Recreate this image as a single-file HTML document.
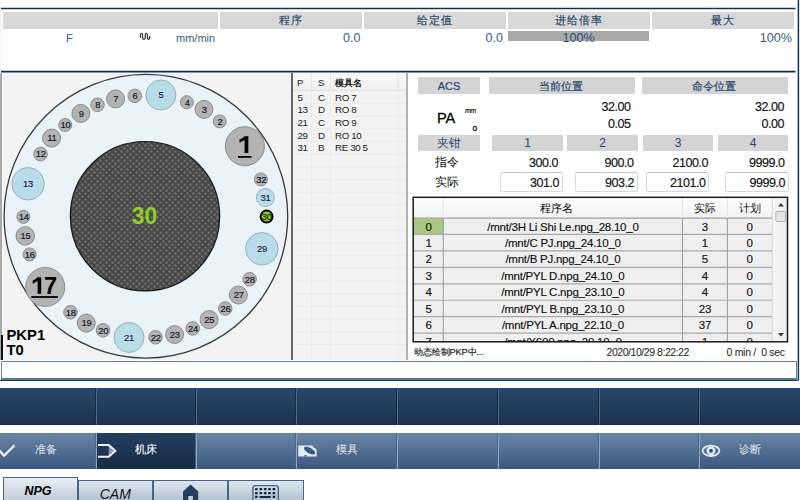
<!DOCTYPE html>
<html><head><meta charset="utf-8">
<style>
*{margin:0;padding:0;box-sizing:border-box}
html,body{width:800px;height:500px;overflow:hidden;background:#fff;font-family:"Liberation Sans",sans-serif;position:relative}
.a{position:absolute}
.hd{position:absolute;top:12px;height:17px;background:#d8d8d8;color:#2c4868;font-size:11px;line-height:17px;text-align:center;letter-spacing:1.2px;-webkit-text-stroke:0.2px #2c4868}
.val{position:absolute;top:31px;font-size:12.5px;line-height:14px;color:#3a5a84}
.box{position:absolute;background:#d4d4d4;color:#2b476b;font-size:11.5px;text-align:center;-webkit-text-stroke:0.2px #2b476b}
.num{position:absolute;font-size:12.5px;line-height:14px;color:#111;text-align:right;letter-spacing:-0.45px;-webkit-text-stroke:0.15px #111}
.inp{position:absolute;top:172px;height:20px;border:1px solid #d6d9dd;border-top-color:#c4c8cc;border-radius:2px;background:#fff;font-size:12.5px;line-height:20.5px;text-align:right;padding-right:2.5px;color:#111;letter-spacing:-0.45px;-webkit-text-stroke:0.15px #111}
.tr{position:absolute;left:0;height:16.45px;width:358px;font-size:11.5px;line-height:17.2px;color:#111;letter-spacing:-0.25px;-webkit-text-stroke:0.15px #111}
.tr span{position:absolute;top:0;text-align:center;white-space:nowrap}
.tlr{position:absolute;left:0;width:420px;height:12.8px;font-size:9.8px;line-height:13px;color:#1a1a1a;letter-spacing:-0.4px}
.tlr span{position:absolute;top:0}
.b1{position:absolute;top:388px;height:37px;background:linear-gradient(#294769,#1d3452 95%,#12284a)}
.b2{position:absolute;top:433px;height:36px;background:linear-gradient(#5f7ea2 0px,#6784a6 2px,#3a587d);color:#e6edf5;font-size:11px;line-height:36px}
.sep{position:absolute;width:2px;background:linear-gradient(90deg,#172a42 50%,#4d6888 50%)}
.tab{position:absolute;top:480px;height:24px;border:1px solid #4b6383;border-bottom:none;background:linear-gradient(#dfe7ee,#a9bccc)}
.ts{font-size:9.4px;letter-spacing:-0.2px;text-anchor:middle;fill:#151c30;stroke:#151c30;stroke-width:0.2px;font-family:"Liberation Sans",sans-serif}
.tb{font-size:9.4px;letter-spacing:-0.2px;text-anchor:middle;fill:#1a2238;stroke:#1a2238;stroke-width:0.15px;font-family:"Liberation Sans",sans-serif}
.th{font-size:23.5px;font-weight:bold;text-anchor:middle;fill:#000;font-family:"Liberation Sans",sans-serif}
</style></head><body>
<!-- top frame -->
<div class="a" style="left:0;top:0;width:1px;height:72px;background:#f2f2f2"></div>
<svg class="a" style="left:0;top:0" width="800" height="382"><line x1="1" y1="8.6" x2="795.5" y2="8.6" stroke="#12325a" stroke-width="1.5"/><line x1="798.4" y1="0" x2="798.4" y2="380.5" stroke="#12325a" stroke-width="1.5"/><line x1="1" y1="71.6" x2="795.5" y2="71.6" stroke="#0e2d52" stroke-width="1.8"/></svg>
<div class="hd" style="left:3px;width:215px"></div>
<div class="hd" style="left:220px;width:142px">程序</div>
<div class="hd" style="left:364px;width:142px">给定值</div>
<div class="hd" style="left:508px;width:142px">进给倍率</div>
<div class="hd" style="left:652px;width:142px">最大</div>
<div class="val" style="left:66px;font-size:11.5px">F</div>
<svg class="a" style="left:139px;top:33px" width="12" height="8"><path d="M1.4 4.8 V2.2 Q1.4 0.5 2.5 0.5 Q3.6 0.5 3.6 2.2 V4.6 Q3.6 6.4 4.9 6.4 Q6.2 6.4 6.2 4.6 V2.2 Q6.2 0.5 7.3 0.5 Q8.4 0.5 8.4 2.2 V4.6 Q8.4 6.4 9.55 6.4 Q10.7 6.4 10.7 4.6 V3" fill="none" stroke="#1e1e1e" stroke-width="1.1"/></svg>
<div class="val" style="left:176px;font-size:11px">mm/min</div>
<div class="val" style="left:220px;width:140.5px;text-align:right">0.0</div>
<div class="val" style="left:364px;width:139px;text-align:right">0.0</div>
<div class="a" style="left:508px;top:31px;width:141px;height:10px;background:#a9a9a9"></div>
<div class="val" style="left:508px;top:30.5px;width:141px;text-align:center;color:#2f4d72;font-size:12.6px">100%</div>
<div class="val" style="left:652px;width:140px;text-align:right;font-size:12.6px">100%</div>


<!-- left panel -->
<div class="a" style="left:0;top:73px;width:292px;height:287px;background:#f3f3f3;border-left:2px solid #a9a9a9"></div><div class="a" style="left:2px;top:73px;width:1px;height:287px;background:#fcfcfc"></div>
<div class="a" style="left:291px;top:73px;width:1.5px;height:287px;background:#666"></div>
<svg class="a" style="left:0;top:0" width="292" height="360">
<defs>
<pattern id="dots" width="6" height="6" patternUnits="userSpaceOnUse" x="0.5" y="0.5"><rect width="6" height="6" fill="#484848"/><circle cx="1" cy="1" r="0.85" fill="#a6a6a6"/><circle cx="4" cy="4" r="0.85" fill="#a6a6a6"/></pattern>
</defs>
<circle cx="145.9" cy="216.25" r="141.8" fill="#e9f3f8" stroke="#3a3a3a" stroke-width="1.3"/>
<circle cx="145" cy="216.2" r="74.6" fill="url(#dots)" stroke="#1e1e1e" stroke-width="1.4"/>
<text x="144.5" y="224" style="font-size:23px;font-weight:bold;fill:#8dcf22;text-anchor:middle;font-family:'Liberation Sans',sans-serif">30</text>
<circle cx="244.9" cy="146.2" r="19.5" fill="#b3b3b3" stroke="#8c8c8c" stroke-width="1"/>
<path d="M244.6 136.2 H248.3 V153 H244.6 V139.9 L239.5 142.7 V139.5 Q242.6 138.5 244.6 136.2 Z" fill="#000"/>
<rect x="238" y="156" width="13.5" height="1.8" fill="#000"/>
<circle cx="219.75" cy="121.4" r="6.5" fill="#b3b3b3" stroke="#8c8c8c" stroke-width="1"/>
<text x="220.0" y="124.70" class="ts">2</text>
<circle cx="204" cy="109.4" r="9.0" fill="#b3b3b3" stroke="#8c8c8c" stroke-width="1"/>
<text x="204.25" y="112.70" class="ts">3</text>
<circle cx="186.9" cy="102.25" r="6.5" fill="#b3b3b3" stroke="#8c8c8c" stroke-width="1"/>
<text x="187.15" y="105.55" class="ts">4</text>
<circle cx="160.9" cy="95" r="15.0" fill="#b9dcea" stroke="#9ab0bb" stroke-width="1"/>
<text x="160.9" y="98.30" class="tb">5</text>
<circle cx="134.75" cy="95.9" r="6.75" fill="#b3b3b3" stroke="#8c8c8c" stroke-width="1"/>
<text x="135.0" y="99.20" class="ts">6</text>
<circle cx="115.6" cy="98.9" r="9.0" fill="#b3b3b3" stroke="#8c8c8c" stroke-width="1"/>
<text x="115.85" y="102.20" class="ts">7</text>
<circle cx="97.5" cy="104.75" r="6.75" fill="#b3b3b3" stroke="#8c8c8c" stroke-width="1"/>
<text x="97.75" y="108.05" class="ts">8</text>
<circle cx="80.9" cy="113.4" r="9.0" fill="#b3b3b3" stroke="#8c8c8c" stroke-width="1"/>
<text x="81.15" y="116.70" class="ts">9</text>
<circle cx="65.25" cy="125" r="6.5" fill="#b3b3b3" stroke="#8c8c8c" stroke-width="1"/>
<text x="65.5" y="128.30" class="ts">10</text>
<circle cx="51.6" cy="138.1" r="9.0" fill="#b3b3b3" stroke="#8c8c8c" stroke-width="1"/>
<text x="51.85" y="141.40" class="ts">11</text>
<circle cx="40.5" cy="154.1" r="6.75" fill="#b3b3b3" stroke="#8c8c8c" stroke-width="1"/>
<text x="40.75" y="157.40" class="ts">12</text>
<circle cx="28.1" cy="183.75" r="16.25" fill="#b9dcea" stroke="#9ab0bb" stroke-width="1"/>
<text x="28.1" y="187.05" class="tb">13</text>
<circle cx="23.4" cy="216.9" r="6.5" fill="#b3b3b3" stroke="#8c8c8c" stroke-width="1"/>
<text x="23.65" y="220.20" class="ts">14</text>
<circle cx="25.25" cy="235.9" r="9.25" fill="#b3b3b3" stroke="#8c8c8c" stroke-width="1"/>
<text x="25.5" y="239.20" class="ts">15</text>
<circle cx="29.6" cy="254.4" r="6.5" fill="#b3b3b3" stroke="#8c8c8c" stroke-width="1"/>
<text x="29.85" y="257.70" class="ts">16</text>
<circle cx="45.25" cy="287" r="19.5" fill="#b3b3b3" stroke="#8c8c8c" stroke-width="1"/>
<path d="M37.6 277.3 H41.2 V293.8 H37.6 V280.9 L32.7 283.7 V280.5 Q35.6 279.5 37.6 277.3 Z" fill="#000"/><text x="44" y="293.8" style="font-size:23.5px;font-weight:bold;fill:#000;font-family:'Liberation Sans',sans-serif">7</text>
<rect x="31.3" y="296.1" width="26.6" height="1.8" fill="#000"/>
<circle cx="70.5" cy="312.25" r="6.75" fill="#b3b3b3" stroke="#8c8c8c" stroke-width="1"/>
<text x="70.75" y="315.55" class="ts">18</text>
<circle cx="86.25" cy="323.1" r="9.0" fill="#b3b3b3" stroke="#8c8c8c" stroke-width="1"/>
<text x="86.5" y="326.40" class="ts">19</text>
<circle cx="103" cy="330.25" r="6.75" fill="#b3b3b3" stroke="#8c8c8c" stroke-width="1"/>
<text x="103.25" y="333.55" class="ts">20</text>
<circle cx="129" cy="337.5" r="15.0" fill="#b9dcea" stroke="#9ab0bb" stroke-width="1"/>
<text x="129" y="340.80" class="tb">21</text>
<circle cx="155.5" cy="337.25" r="6.75" fill="#b3b3b3" stroke="#8c8c8c" stroke-width="1"/>
<text x="155.75" y="340.55" class="ts">22</text>
<circle cx="174.6" cy="334.6" r="9.0" fill="#b3b3b3" stroke="#8c8c8c" stroke-width="1"/>
<text x="174.85" y="337.90" class="ts">23</text>
<circle cx="192.75" cy="328.4" r="6.75" fill="#b3b3b3" stroke="#8c8c8c" stroke-width="1"/>
<text x="193.0" y="331.70" class="ts">24</text>
<circle cx="209.1" cy="319.6" r="9.0" fill="#b3b3b3" stroke="#8c8c8c" stroke-width="1"/>
<text x="209.35" y="322.90" class="ts">25</text>
<circle cx="225.25" cy="308.5" r="6.75" fill="#b3b3b3" stroke="#8c8c8c" stroke-width="1"/>
<text x="225.5" y="311.80" class="ts">26</text>
<circle cx="238.4" cy="295" r="9.0" fill="#b3b3b3" stroke="#8c8c8c" stroke-width="1"/>
<text x="238.65" y="298.30" class="ts">27</text>
<circle cx="249.6" cy="279.25" r="6.75" fill="#b3b3b3" stroke="#8c8c8c" stroke-width="1"/>
<text x="249.85" y="282.55" class="ts">28</text>
<circle cx="261.9" cy="248.75" r="16.25" fill="#b9dcea" stroke="#9ab0bb" stroke-width="1"/>
<text x="261.9" y="252.05" class="tb">29</text>
<circle cx="266.6" cy="216.6" r="6.0" fill="#8ccf1c" stroke="#000" stroke-width="2"/>
<text x="266.85" y="219.90" class="ts">30</text>
<circle cx="265.4" cy="197.5" r="9.0" fill="#b9dcea" stroke="#9ab0bb" stroke-width="1"/>
<text x="265.4" y="200.80" class="tb">31</text>
<circle cx="260.9" cy="179.4" r="6.5" fill="#b3b3b3" stroke="#8c8c8c" stroke-width="1"/>
<text x="261.15" y="182.70" class="ts">32</text>
</svg>
<div class="a" style="left:6.5px;top:328px;font-size:14.8px;font-weight:bold;line-height:14.7px;color:#000">PKP1<br>T0</div>
<div class="a" style="left:1px;top:335px;width:1.5px;height:25px;background:#111"></div>

<!-- tool list -->
<div class="a" style="left:293px;top:73px;width:114px;height:287px;background:#f3f3f3"></div>
<div class="a" style="left:293px;top:73px;width:113px;height:17.6px;background:linear-gradient(#fbfbfb,#eeeeee)"></div>
<svg class="a" style="left:0;top:0" width="420" height="360">
<line x1="293" y1="90.6" x2="406" y2="90.6" stroke="#e2e2e2" stroke-width="1"/>
<line x1="293" y1="103.30" x2="406" y2="103.30" stroke="#ececec" stroke-width="1"/>
<line x1="293" y1="116.00" x2="406" y2="116.00" stroke="#ececec" stroke-width="1"/>
<line x1="293" y1="128.70" x2="406" y2="128.70" stroke="#ececec" stroke-width="1"/>
<line x1="293" y1="141.40" x2="406" y2="141.40" stroke="#ececec" stroke-width="1"/>
<line x1="293" y1="154.10" x2="406" y2="154.10" stroke="#ececec" stroke-width="1"/>
<line x1="293" y1="166.80" x2="406" y2="166.80" stroke="#ececec" stroke-width="1"/>
<line x1="293" y1="179.50" x2="406" y2="179.50" stroke="#ececec" stroke-width="1"/>
<line x1="293" y1="192.20" x2="406" y2="192.20" stroke="#ececec" stroke-width="1"/>
<line x1="293" y1="204.90" x2="406" y2="204.90" stroke="#ececec" stroke-width="1"/>
<line x1="293" y1="217.60" x2="406" y2="217.60" stroke="#ececec" stroke-width="1"/>
<line x1="293" y1="230.30" x2="406" y2="230.30" stroke="#ececec" stroke-width="1"/>
<line x1="293" y1="243.00" x2="406" y2="243.00" stroke="#ececec" stroke-width="1"/>
<line x1="293" y1="255.70" x2="406" y2="255.70" stroke="#ececec" stroke-width="1"/>
<line x1="293" y1="268.40" x2="406" y2="268.40" stroke="#ececec" stroke-width="1"/>
<line x1="293" y1="281.10" x2="406" y2="281.10" stroke="#ececec" stroke-width="1"/>
<line x1="293" y1="293.80" x2="406" y2="293.80" stroke="#ececec" stroke-width="1"/>
<line x1="293" y1="306.50" x2="406" y2="306.50" stroke="#ececec" stroke-width="1"/>
<line x1="293" y1="319.20" x2="406" y2="319.20" stroke="#ececec" stroke-width="1"/>
<line x1="293" y1="331.90" x2="406" y2="331.90" stroke="#ececec" stroke-width="1"/>
<line x1="293" y1="344.60" x2="406" y2="344.60" stroke="#ececec" stroke-width="1"/>
<line x1="311.5" y1="90.6" x2="311.5" y2="360" stroke="#ececec" stroke-width="1"/>
<line x1="330.5" y1="90.6" x2="330.5" y2="360" stroke="#ececec" stroke-width="1"/>
<line x1="398" y1="90.6" x2="398" y2="360" stroke="#ececec" stroke-width="1"/>
<line x1="311.5" y1="73" x2="311.5" y2="90.6" stroke="#e4e4e4" stroke-width="1"/>
<line x1="330.5" y1="73" x2="330.5" y2="90.6" stroke="#e4e4e4" stroke-width="1"/>
<line x1="398" y1="73" x2="398" y2="90.6" stroke="#e4e4e4" stroke-width="1"/>
</svg>
<div class="a" style="left:297px;top:75.5px;font-size:9.5px;line-height:13px;color:#222">P</div>
<div class="a" style="left:318px;top:75.5px;font-size:9.5px;line-height:13px;color:#222">S</div>
<div class="a" style="left:335px;top:76.5px;font-size:9px;line-height:13px;color:#000;-webkit-text-stroke:0.25px #000">模具名</div>
<div class="tlr" style="top:90.60px"><span style="left:297.5px">5</span><span style="left:318px">C</span><span style="left:335px">RO 7</span></div>
<div class="tlr" style="top:103.30px"><span style="left:297.5px">13</span><span style="left:318px">D</span><span style="left:335px">RO 8</span></div>
<div class="tlr" style="top:116.00px"><span style="left:297.5px">21</span><span style="left:318px">C</span><span style="left:335px">RO 9</span></div>
<div class="tlr" style="top:128.70px"><span style="left:297.5px">29</span><span style="left:318px">D</span><span style="left:335px">RO 10</span></div>
<div class="tlr" style="top:141.40px"><span style="left:297.5px">31</span><span style="left:318px">B</span><span style="left:335px">RE 30&nbsp;5</span></div>
<div class="a" style="left:406px;top:73px;width:1.5px;height:287px;background:#b2b2b2"></div>

<!-- right panel -->
<div class="box" style="left:418px;top:77px;width:62px;height:16.5px;line-height:18.5px;font-size:11px">ACS</div>
<div class="box" style="left:489px;top:77px;width:146px;height:16.5px;line-height:18.5px;font-size:11px;padding-right:2px">当前位置</div>
<div class="box" style="left:642px;top:77px;width:146px;height:16.5px;line-height:18.5px;font-size:11px;padding-right:2px">命令位置</div>
<div class="a" style="left:437px;top:110px;font-size:14.5px;line-height:16px;color:#000;-webkit-text-stroke:0.3px #000">PA</div>
<div class="a" style="left:465px;top:106px;font-size:7px;line-height:9px;color:#000;letter-spacing:-0.5px;-webkit-text-stroke:0.15px #000">mm</div>
<div class="a" style="left:472.5px;top:124px;font-size:8.5px;line-height:9px;color:#111;-webkit-text-stroke:0.3px #111">o</div>
<div class="num" style="left:560px;top:100px;width:70.5px">32.00</div>
<div class="num" style="left:560px;top:117px;width:70.5px">0.05</div>
<div class="num" style="left:700px;top:100px;width:84px">32.00</div>
<div class="num" style="left:700px;top:117px;width:84px">0.00</div>
<div class="box" style="left:418px;top:135px;width:62px;height:16px;line-height:16.5px;font-size:12px;-webkit-text-stroke:0">夹钳</div>
<div class="box" style="left:492px;top:135px;width:71px;height:16px;line-height:16.5px;font-size:12px;-webkit-text-stroke:0">1</div>
<div class="box" style="left:567px;top:135px;width:71px;height:16px;line-height:16.5px;font-size:12px;-webkit-text-stroke:0">2</div>
<div class="box" style="left:643px;top:135px;width:70px;height:16px;line-height:16.5px;font-size:12px;-webkit-text-stroke:0">3</div>
<div class="box" style="left:718px;top:135px;width:70px;height:16px;line-height:16.5px;font-size:12px;-webkit-text-stroke:0">4</div>
<div class="a" style="left:435px;top:155px;font-size:12px;line-height:15px;color:#111">指令</div>
<div class="a" style="left:435px;top:174.5px;font-size:12px;line-height:15px;color:#111">实际</div>
<div class="num" style="left:490px;top:155.5px;width:68px">300.0</div>
<div class="num" style="left:560px;top:155.5px;width:73.5px">900.0</div>
<div class="num" style="left:640px;top:155.5px;width:68px">2100.0</div>
<div class="num" style="left:710px;top:155.5px;width:74.5px">9999.0</div>
<div class="inp" style="left:499.5px;width:63px">301.0</div>
<div class="inp" style="left:575px;width:62.5px">903.2</div>
<div class="inp" style="left:646px;width:63px">2101.0</div>
<div class="inp" style="left:725px;width:63.5px">9999.0</div>

<!-- table -->
<div class="a" style="left:413px;top:197px;width:375px;height:145px;background:#efefef"></div>
<div class="a" style="left:413px;top:197px;width:359px;height:21px;background:linear-gradient(#fdfdfd,#f2f2f2)"></div>
<div class="a" style="left:772px;top:197px;width:15.5px;height:145px;background:linear-gradient(90deg,#f6f6f6,#ececec)"></div>
<svg class="a" style="left:0;top:0" width="800" height="360">
<rect x="413" y="218.5" width="30.3" height="16.1" fill="#a9c884"/>
<line x1="413" y1="218.1" x2="772" y2="218.1" stroke="#a0a0a0" stroke-width="1.1"/>
<line x1="413" y1="234.45" x2="772" y2="234.45" stroke="#a8a8a8" stroke-width="1.2"/>
<line x1="413" y1="250.90" x2="772" y2="250.90" stroke="#a8a8a8" stroke-width="1.2"/>
<line x1="413" y1="267.35" x2="772" y2="267.35" stroke="#a8a8a8" stroke-width="1.2"/>
<line x1="413" y1="283.80" x2="772" y2="283.80" stroke="#a8a8a8" stroke-width="1.2"/>
<line x1="413" y1="300.25" x2="772" y2="300.25" stroke="#a8a8a8" stroke-width="1.2"/>
<line x1="413" y1="316.70" x2="772" y2="316.70" stroke="#a8a8a8" stroke-width="1.2"/>
<line x1="413" y1="333.15" x2="772" y2="333.15" stroke="#a8a8a8" stroke-width="1.2"/>
<line x1="443.3" y1="218" x2="443.3" y2="342" stroke="#a0a0a0" stroke-width="1.1"/>
<line x1="682.5" y1="218" x2="682.5" y2="342" stroke="#a0a0a0" stroke-width="1.1"/>
<line x1="727.4" y1="218" x2="727.4" y2="342" stroke="#a0a0a0" stroke-width="1.1"/>
<line x1="443.3" y1="198" x2="443.3" y2="218" stroke="#e6e6e6" stroke-width="1"/>
<line x1="682.5" y1="198" x2="682.5" y2="218" stroke="#e6e6e6" stroke-width="1"/>
<line x1="727.4" y1="198" x2="727.4" y2="218" stroke="#e6e6e6" stroke-width="1"/>
<line x1="772.3" y1="198" x2="772.3" y2="342" stroke="#d8d8d8" stroke-width="1"/>
<path d="M778 206.5 L781 203 L784 206.5 Z" fill="#3a3a3a"/>
<path d="M778 333 L781 336.5 L784 333 Z" fill="#3a3a3a"/>
<rect x="775.8" y="211.5" width="9.6" height="10" rx="1.2" fill="#e6e6e6" stroke="#a8a8a8" stroke-width="0.8"/>
<rect x="413.2" y="197.3" width="374.3" height="144.5" fill="none" stroke="#1c1c1c" stroke-width="1.5"/>
</svg>
<div class="a" style="left:436.5px;top:200.5px;width:239px;text-align:center;font-size:11px;line-height:14px;color:#000">程序名</div>
<div class="a" style="left:682.5px;top:200.5px;width:45px;text-align:center;font-size:11px;line-height:14px;color:#111">实际</div>
<div class="a" style="left:727.4px;top:200.5px;width:44.6px;text-align:center;font-size:11px;line-height:14px;color:#111">计划</div>
<div class="a" style="left:414px;top:218.5px;width:358px;height:123px;overflow:hidden">
<div class="tr" style="top:0.00px"><span style="left:0;width:29.3px">0</span><span style="left:29.3px;width:239.2px">/mnt/3H Li Shi Le.npg_28.10_0</span><span style="left:268.5px;width:44.9px">3</span><span style="left:313.4px;width:44.6px">0</span></div>
<div class="tr" style="top:16.45px"><span style="left:0;width:29.3px">1</span><span style="left:29.3px;width:239.2px">/mnt/C PJ.npg_24.10_0</span><span style="left:268.5px;width:44.9px">1</span><span style="left:313.4px;width:44.6px">0</span></div>
<div class="tr" style="top:32.90px"><span style="left:0;width:29.3px">2</span><span style="left:29.3px;width:239.2px">/mnt/B PJ.npg_24.10_0</span><span style="left:268.5px;width:44.9px">5</span><span style="left:313.4px;width:44.6px">0</span></div>
<div class="tr" style="top:49.35px"><span style="left:0;width:29.3px">3</span><span style="left:29.3px;width:239.2px">/mnt/PYL D.npg_24.10_0</span><span style="left:268.5px;width:44.9px">4</span><span style="left:313.4px;width:44.6px">0</span></div>
<div class="tr" style="top:65.80px"><span style="left:0;width:29.3px">4</span><span style="left:29.3px;width:239.2px">/mnt/PYL C.npg_23.10_0</span><span style="left:268.5px;width:44.9px">4</span><span style="left:313.4px;width:44.6px">0</span></div>
<div class="tr" style="top:82.25px"><span style="left:0;width:29.3px">5</span><span style="left:29.3px;width:239.2px">/mnt/PYL B.npg_23.10_0</span><span style="left:268.5px;width:44.9px">23</span><span style="left:313.4px;width:44.6px">0</span></div>
<div class="tr" style="top:98.70px"><span style="left:0;width:29.3px">6</span><span style="left:29.3px;width:239.2px">/mnt/PYL A.npg_22.10_0</span><span style="left:268.5px;width:44.9px">37</span><span style="left:313.4px;width:44.6px">0</span></div>
<div class="tr" style="top:115.15px"><span style="left:0;width:29.3px">7</span><span style="left:29.3px;width:239.2px">/mnt/X600.npg_20.10_0</span><span style="left:268.5px;width:44.9px">1</span><span style="left:313.4px;width:44.6px">0</span></div>
</div>
<div class="a" style="left:414px;top:345.5px;font-size:9.3px;line-height:12px;color:#111;-webkit-text-stroke:0.15px #111;letter-spacing:-0.15px">动态绘制PKP中...</div>
<div class="a" style="left:606.5px;top:346px;font-size:10.5px;line-height:12px;color:#1a1a1a;letter-spacing:-0.45px">2020/10/29 8:22:22</div>
<div class="a" style="left:726.5px;top:346px;font-size:10.5px;line-height:12px;color:#1a1a1a;white-space:pre;letter-spacing:-0.3px">0 min /  0 sec</div>

<!-- status box -->
<div class="a" style="left:1px;top:361px;width:796px;height:18.5px;border:1px solid #6a84a0;border-bottom:2px solid #5a7593;background:#fff"></div>
<div class="a" style="left:0px;top:379.5px;width:798px;height:1.5px;background:#1d3a5c"></div>

<!-- band 1 -->
<div class="b1" style="left:0;width:800px"></div>
<div class="sep" style="left:94.5px;top:388px;height:37px"></div>
<div class="sep" style="left:194.5px;top:388px;height:37px"></div>
<div class="sep" style="left:295.0px;top:388px;height:37px"></div>
<div class="sep" style="left:396.0px;top:388px;height:37px"></div>
<div class="sep" style="left:497.0px;top:388px;height:37px"></div>
<div class="sep" style="left:597.5px;top:388px;height:37px"></div>
<div class="sep" style="left:698.0px;top:388px;height:37px"></div>

<!-- band 2 -->
<div class="b2" style="left:0;width:800px"></div>
<div class="a" style="left:96px;top:433px;width:99.5px;height:36px;background:linear-gradient(#253f61,#172a45)"></div>
<div class="sep" style="left:94.5px;top:433px;height:36px;background:linear-gradient(90deg,#4a678a 50%,#8ea4bb 50%)"></div>
<div class="sep" style="left:194.5px;top:433px;height:36px;background:linear-gradient(90deg,#4a678a 50%,#8ea4bb 50%)"></div>
<div class="sep" style="left:295.0px;top:433px;height:36px;background:linear-gradient(90deg,#4a678a 50%,#8ea4bb 50%)"></div>
<div class="sep" style="left:396.0px;top:433px;height:36px;background:linear-gradient(90deg,#4a678a 50%,#8ea4bb 50%)"></div>
<div class="sep" style="left:497.0px;top:433px;height:36px;background:linear-gradient(90deg,#4a678a 50%,#8ea4bb 50%)"></div>
<div class="sep" style="left:597.5px;top:433px;height:36px;background:linear-gradient(90deg,#4a678a 50%,#8ea4bb 50%)"></div>
<div class="sep" style="left:698.0px;top:433px;height:36px;background:linear-gradient(90deg,#4a678a 50%,#8ea4bb 50%)"></div>
<svg class="a" style="left:0;top:440px" width="18" height="20"><path d="M0 11 L4 15.7 L13.8 6" fill="none" stroke="#f2f5f8" stroke-width="2.3" stroke-linecap="round" stroke-linejoin="round"/></svg>
<div class="a" style="left:35px;top:442px;font-size:10.5px;line-height:15px;color:#d3dce6;-webkit-text-stroke:0.25px #d3dce6;text-shadow:0 0 1.5px rgba(0,10,30,0.6)">准备</div>
<svg class="a" style="left:96px;top:440px" width="24" height="22"><path d="M12.7 5 L19.4 10.8 L12.7 16.8 Z" fill="rgba(225,232,240,0.55)"/><path d="M2 5 H12.7 L19.4 10.8 L12.7 16.8 H2" fill="none" stroke="#eef2f6" stroke-width="1.9" stroke-linejoin="miter"/></svg>
<div class="a" style="left:134.5px;top:442px;font-size:10.5px;line-height:15px;color:#eef2f6;-webkit-text-stroke:0.25px #dde5ee;text-shadow:0 0 1.5px rgba(0,10,30,0.7)">机床</div>
<svg class="a" style="left:297px;top:444px" width="22" height="14"><rect x="1.3" y="1.5" width="18.3" height="11" fill="#e3e9f0"/><ellipse cx="12.6" cy="6.6" rx="6.3" ry="2.7" transform="rotate(30 12.6 6.6)" fill="#3b587c"/><path d="M15 1.5 L19.6 1.5 L19.6 5.5 Z" fill="#3b587c"/><rect x="7.5" y="11" width="2" height="1.5" fill="#3b587c"/></svg>
<div class="a" style="left:335.5px;top:442px;font-size:10.5px;line-height:15px;color:#d3dce6;-webkit-text-stroke:0.25px #d3dce6;text-shadow:0 0 1.5px rgba(0,10,30,0.6)">模具</div>
<svg class="a" style="left:700px;top:442px" width="23" height="18"><ellipse cx="11" cy="8.8" rx="8.4" ry="5.2" fill="none" stroke="#e4eaf1" stroke-width="1.8"/><circle cx="11" cy="8.8" r="3.3" fill="none" stroke="#e4eaf1" stroke-width="2.4"/><circle cx="11" cy="8.8" r="1.1" fill="#203a5c"/></svg>
<div class="a" style="left:738.5px;top:442px;font-size:10.5px;line-height:15px;color:#d3dce6;-webkit-text-stroke:0.25px #d3dce6;text-shadow:0 0 1.5px rgba(0,10,30,0.6)">诊断</div>

<!-- bottom tabs -->
<div class="tab" style="left:2.5px;top:476.5px;width:75.5px;background:linear-gradient(#e8eef4,#bfccd8)"></div>
<div class="a" style="left:24.5px;top:484px;font-size:12.5px;line-height:14px;font-weight:bold;font-style:italic;color:#000">NPG</div>
<div class="tab" style="left:78px;width:75px"></div>
<div class="a" style="left:99.7px;top:486px;font-size:14px;line-height:16px;font-style:italic;color:#111">CAM</div>
<div class="tab" style="left:153px;width:75px"></div>
<svg class="a" style="left:182px;top:484px" width="18" height="18"><path d="M1 7.5 L8.6 0.5 L16.2 7.5 V18 H1 Z" fill="#223f63"/><rect x="6.3" y="12" width="4.6" height="6" fill="#c3cfda"/></svg>
<div class="tab" style="left:228px;width:76px"></div>
<svg class="a" style="left:252px;top:485px" width="28" height="18"><rect x="0.9" y="0.5" width="25.4" height="18" rx="2.8" fill="none" stroke="#4e6585" stroke-width="1.4"/><g fill="#12294a"><rect x="3" y="3" width="2.6" height="2.3" rx="0.4"/><rect x="7.5" y="3" width="2.6" height="2.3" rx="0.4"/><rect x="11.9" y="3" width="2.6" height="2.3" rx="0.4"/><rect x="16.2" y="3" width="2.6" height="2.3" rx="0.4"/><rect x="20.6" y="3" width="2.6" height="2.3" rx="0.4"/><rect x="3" y="7" width="2.6" height="2.3" rx="0.4"/><rect x="7.5" y="7" width="2.6" height="2.3" rx="0.4"/><rect x="11.9" y="7" width="2.6" height="2.3" rx="0.4"/><rect x="16.2" y="7" width="2.6" height="2.3" rx="0.4"/><rect x="20.6" y="7" width="2.6" height="2.3" rx="0.4"/><rect x="3" y="10.7" width="2.6" height="2.3" rx="0.4"/><rect x="20.6" y="10.7" width="2.6" height="2.3" rx="0.4"/><rect x="7.5" y="10.9" width="11.3" height="2" rx="0.4"/></g></svg>
</body></html>
